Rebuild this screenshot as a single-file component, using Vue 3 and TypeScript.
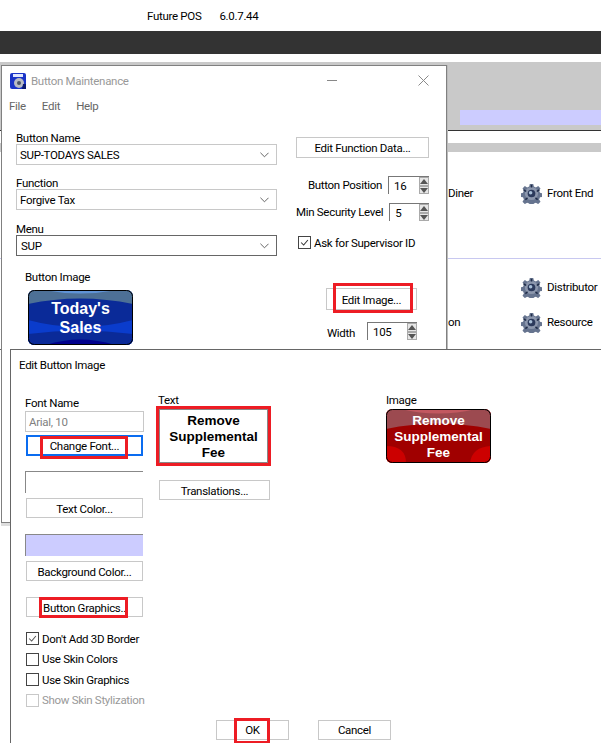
<script setup lang="ts">
const checks = [
  { label: "Don't Add 3D Border", checked: true, disabled: false },
  { label: 'Use Skin Colors', checked: false, disabled: false },
  { label: 'Use Skin Graphics', checked: false, disabled: false },
  { label: 'Show Skin Stylization', checked: false, disabled: true },
]
</script>

<template>
  <div class="page">
    <svg class="defs" width="0" height="0" aria-hidden="true">
      <symbol id="gear" viewBox="0 0 24 24">
        <path fill="#66748f" d="M10 1h4l.7 3 2.3 1 2.7-1.6 2.6 2.8-1.6 2.5 1 2.4 3 .7v4l-3 .6-1 2.4 1.6 2.6-2.7 2.7-2.6-1.6-2.3 1-.7 3h-4l-.6-3-2.4-1-2.6 1.6-2.7-2.7 1.6-2.6-1-2.4-3-.6v-4l3-.7 1-2.4-1.6-2.5 2.7-2.8 2.6 1.6 2.4-1z" />
        <circle cx="12" cy="12" r="7.5" fill="#8c97ad" />
        <circle cx="12" cy="12" r="4.4" fill="#2c3a5c" />
        <circle cx="11" cy="11" r="2" fill="#a9c0d8" />
        <path d="M12 2v3M3 8l3 1.500M21 8l-3 1.500M5 19l2.500-2M19 19l-2.500-2" stroke="#1f2b47" stroke-width="1.600" />
      </symbol>
    </svg>

    <header class="top-bar">
      <span class="app-name">Future POS</span>
      <span class="app-version">6.0.7.44</span>
    </header>
    <div class="dark-bar"></div>

    <div class="desktop">
      <div class="app-bg">
        <div class="grey-band"><div class="lavender-strip"></div></div>
        <div class="white-gap"></div>
        <div class="grey-thin"></div>
        <div class="menu-row row-a">
          <span class="cut">Diner</span>
          <svg class="gear"><use href="#gear" /></svg>
          <span>Front End</span>
        </div>
        <div class="divider"></div>
        <div class="menu-row row-b">
          <span class="cut"></span>
          <svg class="gear"><use href="#gear" /></svg>
          <span>Distributor</span>
        </div>
        <div class="menu-row row-c">
          <span class="cut">on</span>
          <svg class="gear"><use href="#gear" /></svg>
          <span>Resource</span>
        </div>
        <div class="bg-rule"></div>
      </div>

      <section class="window maintenance">
        <div class="title-bar">
          <svg class="app-icon" viewBox="0 0 16 16">
            <rect width="16" height="16" rx="2" fill="#1a34c8" />
            <rect x="3" y="1" width="10" height="3" fill="#dfe6ff" />
            <circle cx="9" cy="10" r="5" fill="#b9bcc4" />
            <circle cx="9" cy="10" r="2" fill="#4b5568" />
            <path d="M13 11h3v5h-4z" fill="#0b1a70" />
          </svg>
          <span class="title-text">Button Maintenance</span>
          <span class="win-min"></span>
          <svg class="win-close" viewBox="0 0 11 11">
            <path d="M.5.500l10 10M10.500.500l-10 10" stroke="#8a8a8a" fill="none" />
          </svg>
        </div>
        <nav class="menu-bar">
          <span>File</span><span>Edit</span><span>Help</span>
        </nav>

        <div class="form">
          <div class="form-left">
            <label class="lbl">Button Name</label>
            <div class="combo"><span>SUP-TODAYS SALES</span><svg class="chev" viewBox="0 0 10 6"><path d="M.5.500l4.500 4.500 4.500-4.500" fill="none" stroke="#555" /></svg></div>
            <label class="lbl mt-18">Function</label>
            <div class="combo"><span>Forgive Tax</span><svg class="chev" viewBox="0 0 10 6"><path d="M.5.500l4.500 4.500 4.500-4.500" fill="none" stroke="#555" /></svg></div>
            <label class="lbl mt-12">Menu</label>
            <div class="combo active"><span>SUP</span><svg class="chev" viewBox="0 0 10 6"><path d="M.5.500l4.500 4.500 4.500-4.500" fill="none" stroke="#555" /></svg></div>
            <label class="lbl image-label">Button Image</label>
            <svg class="btn-img blue" viewBox="0 0 105 55" role="img">
              <defs><clipPath id="blue-clip"><rect width="105" height="55" rx="6" /></clipPath></defs>
              <g clip-path="url(#blue-clip)">
                <rect width="105" height="55" fill="#0a2a98" />
                <path d="M0 0h105v14Q52 3 0 14z" fill="#4d7096" />
                <path d="M16 0h73Q52 7 16 0z" fill="#5f93d6" />
                <path d="M0 30Q52 44 105 30v25H0z" fill="#0a3ccc" />
                <path d="M0 44Q52 37 105 44v11H0z" fill="#0a2a98" />
                <path d="M18 55Q52 44 87 55z" fill="#00008c" />
                <text x="52.500" y="24" class="img-text big">Today's</text>
                <text x="52.500" y="43" class="img-text big">Sales</text>
              </g>
              <rect x=".5" y=".5" width="104" height="54" rx="6" fill="none" stroke="#000" />
            </svg>
          </div>

          <div class="form-right">
            <button class="btn fn-btn">Edit Function Data...</button>
            <div class="spin-row first">
              <span>Button Position</span>
              <div class="spin"><span>16</span><i class="arrows"><b class="up"></b><b class="down"></b></i></div>
            </div>
            <div class="spin-row second">
              <span>Min Security Level</span>
              <div class="spin"><span>5</span><i class="arrows"><b class="up"></b><b class="down"></b></i></div>
            </div>
            <div class="check supervisor">
              <span class="box dark"><svg viewBox="0 0 13 13"><path d="M2.500 6.500l3 3 5-6" fill="none" stroke="#333" stroke-width="1.200" /></svg></span>
              <span>Ask for Supervisor ID</span>
            </div>
            <button class="btn edit-img">Edit Image...<span class="red img-red"></span></button>
            <div class="spin-row width-row">
              <span class="width-label">Width</span>
              <div class="spin"><span>105</span><i class="arrows"><b class="up"></b><b class="down"></b></i></div>
            </div>
          </div>
        </div>
      </section>

      <section class="window editor">
        <div class="editor-title">Edit Button Image</div>
        <div class="editor-body">
          <div class="col-font">
            <label class="lbl">Font Name</label>
            <div class="field">Arial, 10</div>
            <button class="btn change-font">Change Font...<span class="red font-red"></span></button>
            <div class="swatch"></div>
            <button class="btn after-swatch">Text Color...</button>
            <div class="swatch lavender"></div>
            <button class="btn after-swatch">Background Color...</button>
            <button class="btn graphics">Button Graphics..<span class="red gfx-red"></span></button>
            <div class="check-list">
              <div v-for="c in checks" :key="c.label" class="check" :class="{ disabled: c.disabled }">
                <span class="box"><svg v-if="c.checked" viewBox="0 0 13 13"><path d="M2.500 6.500l3 3 5-6" fill="none" stroke="#555" stroke-width="1.200" /></svg></span>
                <span>{{ c.label }}</span>
              </div>
            </div>
          </div>

          <div class="col-text">
            <label class="lbl">Text</label>
            <div class="text-field">
              <div>Remove</div><div>Supplemental</div><div>Fee</div>
              <span class="red text-red"></span>
            </div>
            <button class="btn translations">Translations...</button>
          </div>

          <div class="col-image">
            <label class="lbl">Image</label>
            <svg class="btn-img" viewBox="0 0 105 54" role="img">
              <defs><clipPath id="red-clip"><rect width="105" height="54" rx="6" /></clipPath></defs>
              <g clip-path="url(#red-clip)">
                <rect width="105" height="54" fill="#a00000" />
                <path d="M0 0h105v20Q52 9 0 20z" fill="#9c4a50" />
                <path d="M15 0h75Q52 9 15 0z" fill="#c25860" />
                <path d="M0 37Q20 37 20 54H0z" fill="#cc0000" />
                <path d="M105 37Q86 38 84 54H105z" fill="#cc0000" />
                <text x="52.500" y="16" class="img-text">Remove</text>
                <text x="52.500" y="32" class="img-text">Supplemental</text>
                <text x="52.500" y="48" class="img-text">Fee</text>
              </g>
              <rect x=".5" y=".5" width="104" height="53" rx="6" fill="none" stroke="#000" />
            </svg>
          </div>
        </div>
        <div class="editor-foot">
          <button class="btn foot-btn">OK<span class="red ok-red"></span></button>
          <button class="btn foot-btn cancel">Cancel</button>
        </div>
      </section>
    </div>
  </div>
</template>

<style>
html, body { margin: 0; background: #fff; }
</style>

<style scoped>
.page {
  width: 601px;
  height: 743px;
  overflow: hidden;
  background: #fff;
  color: #000;
  font-family: Roboto, "Liberation Sans", sans-serif;
  font-size: 11.500px;
  line-height: 14px;
  letter-spacing: -0.3px;
}
.defs { position: absolute; }
.top-bar {
  height: 31px;
  display: flex;
  align-items: center;
  padding-left: 147px;
  box-sizing: border-box;
}
.app-version { margin-left: 18px; }
.dark-bar { height: 23px; background: #333; }
.desktop { position: relative; height: 689px; overflow: hidden; }

.app-bg { padding-top: 8px; }
.grey-band { height: 20px; background: #c9c9c9; border-bottom: 1px solid #333; padding-top: 48px; }
.lavender-strip { height: 15px; margin-left: 460px; background: #ccccff; }
.white-gap { height: 12px; }
.grey-thin { height: 9px; background: #c9c9c9; }
.menu-row { display: flex; align-items: center; height: 20px; padding-left: 448px; white-space: nowrap; }
.cut { width: 73px; flex: none; }
.gear { width: 21px; height: 21px; margin-right: 5px; flex: none; }
.row-a { margin-top: 31px; }
.divider { height: 1px; margin-top: 55px; background: #c8c8f0; }
.row-b { margin-top: 18px; }
.row-c { margin-top: 15px; }
.bg-rule { height: 1px; margin-top: 17px; background: #666; }

.window { position: absolute; background: #fff; box-sizing: border-box; }
.maintenance {
  left: 1px;
  top: 11px;
  width: 446px;
  height: 458px;
  border: 1px solid #808080;
  box-shadow: 0 -3px 0 #c9c9c9, 1px 0 0 #bbb, 0 3px 0 #ddd;
}
.title-bar { position: relative; height: 29px; display: flex; align-items: center; padding-left: 8px; }
.app-icon { width: 16px; height: 16px; }
.title-text { margin-left: 5px; color: #999; }
.win-min { position: absolute; left: 325px; top: 14px; width: 10px; height: 1px; background: #888; }
.win-close { position: absolute; left: 416px; top: 9px; width: 11px; height: 11px; }
.menu-bar { height: 22px; display: flex; align-items: center; gap: 16px; padding-left: 7px; color: #666; }

.form { display: flex; padding: 14px 0 0 14px; }
.form-left { width: 261px; }
.form-right { margin-left: 19px; margin-top: 6px; width: 133px; }
.lbl { display: block; height: 13px; line-height: 15px; }
.mt-18 { margin-top: 11px; }
.mt-12 { margin-top: 12px; }
.combo {
  height: 21px;
  box-sizing: border-box;
  border: 1px solid #c8c8c8;
  display: flex;
  align-items: center;
  justify-content: space-between;
  padding: 0 7px 0 3px;
}
.combo.active { border-color: #666; padding-left: 4px; }
.chev { width: 9px; height: 6px; }
.image-label { margin: 14px 0 0 9px; }
.btn-img { display: block; width: 105px; height: 54px; }
.btn-img.blue { height: 55px; margin: 7px 0 0 12px; }
.img-text {
  fill: #fff;
  font-family: "Liberation Sans", sans-serif;
  font-weight: 700;
  font-size: 13.500px;
  text-anchor: middle;
  letter-spacing: 0;
}
.img-text.big { font-size: 16px; }

.btn {
  position: relative;
  display: block;
  box-sizing: border-box;
  padding: 1px 0 0;
  background: #fff;
  border: 1px solid #c8c8c8;
  font: inherit;
  letter-spacing: inherit;
  color: #000;
  text-align: center;
}
.fn-btn { width: 133px; height: 21px; }
.spin-row { display: flex; align-items: center; justify-content: flex-end; gap: 6px; height: 18px; white-space: nowrap; }
.first { margin-top: 18px; }
.second { margin-top: 9px; }
.width-row { margin-top: 12px; width: 121px; gap: 12px; }
.width-label { padding-top: 3px; }
.spin {
  width: 41px;
  height: 18px;
  box-sizing: border-box;
  border-top: 1px solid #777;
  border-left: 1px solid #777;
  position: relative;
  padding: 2px 0 0 5px;
}
.width-row .spin { width: 50px; }
.arrows { position: absolute; right: 0; top: 0; width: 10px; height: 17px; display: flex; flex-direction: column; }
.arrows b { flex: 1; background: #e6e6e6; border: 1px solid #aaa; box-sizing: border-box; position: relative; }
.arrows b::after {
  content: "";
  position: absolute;
  left: 0;
  top: 1px;
  border-left: 4px solid transparent;
  border-right: 4px solid transparent;
}
.arrows .up::after { border-bottom: 5px solid #555; }
.arrows .down::after { border-top: 5px solid #555; }

.check { display: flex; align-items: center; gap: 3px; height: 13px; white-space: nowrap; }
.box { width: 13px; height: 13px; box-sizing: border-box; border: 1px solid #444; flex: none; display: block; }
.box svg { display: block; width: 11px; height: 11px; }
.supervisor { margin: 15px 0 0 2px; }
.edit-img { width: 91px; height: 22px; margin: 39px 0 0 30px; }

.red { position: absolute; border: 3px solid #ed1c24; box-sizing: border-box; pointer-events: none; }
.img-red { left: 6px; right: 3px; top: -6px; bottom: -4px; }

.editor {
  left: 10px;
  top: 295px;
  width: 620px;
  height: 420px;
  border: 1px solid #666;
}
.editor-title { height: 30px; line-height: 30px; padding-left: 8px; }
.editor-body { display: flex; padding-top: 13px; }
.col-font { width: 119px; margin-left: 14px; padding-top: 3px; }
.col-font .lbl { height: 15px; }
.field {
  height: 21px;
  width: 119px;
  box-sizing: border-box;
  border: 1px solid #c8c8c8;
  padding: 3px 3px;
  color: #808080;
}
.col-font .btn { width: 117px; height: 20px; margin-left: 1px; }
.col-font .change-font { height: 21px; margin-top: 3px; border: 2px solid #0a6cf0; }
.swatch { height: 22px; margin-top: 15px; box-sizing: border-box; border-top: 1px solid #888; border-left: 1px solid #888; width: 118px; }
.swatch.lavender { background: #ccccff; margin-top: 16px; }
.col-font .after-swatch { margin-top: 5px; }
.col-font .graphics { margin-top: 16px; }
.font-red { left: 12px; right: 13px; top: -1px; bottom: -5px; }
.gfx-red { left: 12px; right: 14px; top: -1px; bottom: -2px; }
.check-list { margin-top: 15px; margin-left: 1px; display: flex; flex-direction: column; gap: 7.500px; width: 130px; }
.disabled { color: #999; }
.disabled .box { border-color: #c8c8c8; }

.col-text { margin-left: 15px; width: 111px; }
.col-text .lbl, .col-image .lbl { height: 14px; margin-bottom: 2px; }
.col-text .lbl { margin-left: -1px; }
.text-field {
  position: relative;
  width: 109px;
  height: 54px;
  box-sizing: border-box;
  border: 1px solid #888;
  font-family: "Liberation Sans", sans-serif;
  font-weight: 700;
  font-size: 13.500px;
  line-height: 16px;
  letter-spacing: 0;
  text-align: center;
  padding-top: 3px;
}
.text-red { left: -4px; right: -4px; top: -4px; bottom: -4px; }
.translations { width: 111px; height: 20px; margin-top: 17px; }
.col-image { margin-left: 116px; }

.editor-foot { display: flex; gap: 29px; margin: 13px 0 0 205px; }
.foot-btn { width: 73px; height: 20px; }
.ok-red { left: 17px; right: 18px; top: -3px; bottom: -5px; }
</style>
